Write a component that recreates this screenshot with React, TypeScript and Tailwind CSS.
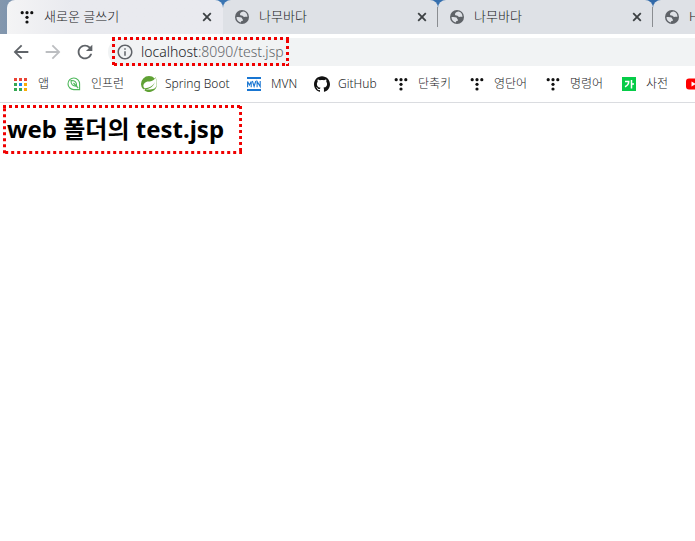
import React from 'react';
import { MdArrowBack, MdArrowForward, MdInfoOutline, MdRefresh } from 'react-icons/md';
import { SiGithub, SiSpring } from 'react-icons/si';

const TistoryIcon = () => (
  <svg viewBox="0 0 14 14" className="size-3.5 shrink-0" fill="#111">
    <circle cx="2.2" cy="2.7" r="1.6" />
    <circle cx="7" cy="2.7" r="1.6" />
    <circle cx="11.8" cy="2.7" r="1.6" />
    <circle cx="7" cy="7.3" r="1.6" />
    <circle cx="7" cy="12" r="1.6" />
  </svg>
);

const AppsIcon = () => (
  <svg viewBox="0 0 13 13" className="size-[13px] shrink-0" shapeRendering="crispEdges">
    <path fill="#ea4335" d="M0 0h3v3H0zM5 0h3v3H5zM10 0h3v3h-3z" />
    <path fill="#34a853" d="M0 5h3v3H0zM0 10h3v3H0zM5 10h3v3H5z" />
    <path fill="#1a82f7" d="M5 5h3v3H5z" />
    <path fill="#fbac05" d="M10 5h3v3h-3zM10 10h3v3h-3z" />
  </svg>
);

const InflearnIcon = () => (
  <svg viewBox="0 0 14 14" className="size-3.5 shrink-0" fill="none" stroke="#4fb85c" strokeWidth="1.1">
    <path d="M12.6 12.6H7A5.8 5.8 0 1 1 12.6 7z" />
    <path d="M4 3.500c3.500-.2 6 1.500 5.700 5.700C6 9.500 3.800 7.500 4 3.500zM6.500 6l4.700 5" />
  </svg>
);

const MavenIcon = () => (
  <svg viewBox="0 0 14 14" className="size-3.5 shrink-0">
    <path fill="#1976d2" d="M0 0h14v2H0zM0 12h14v2H0z" />
    <path
      fill="none"
      stroke="#1976d2"
      strokeWidth="1.1"
      d="M.6 10.200V4.500L2.400 8l1.800-3.500v5.700M5.400 4l1.700 5.500L8.800 4M10.100 10.200V4.500l3.100 5V4"
    />
  </svg>
);

const DictionaryIcon = () => (
  <svg viewBox="0 0 14 14" className="size-3.5 shrink-0">
    <path fill="#06cc48" d="M0 0h14v14H0z" />
    <path fill="none" stroke="#fff" strokeWidth="1.5" d="M3 4.500h3.700c0 2.500-1.300 4.200-3.700 5.200M9.500 3v8.500M9.500 7H12" />
  </svg>
);

const YoutubeIcon = () => (
  <svg viewBox="0 0 14 14" className="size-3.5 shrink-0">
    <rect y="1.500" width="14" height="11" rx="3" fill="#f00" />
    <path fill="#fff" d="M5.500 4.500v5L9.700 7z" />
  </svg>
);

const GlobeIcon = () => (
  <svg viewBox="0 0 14 14" className="size-3.5 shrink-0">
    <circle cx="7" cy="7" r="7" fill="#5f6368" />
    <path fill="#dee1e6" d="M8.800 1.600C6.800 1.800 5.300 2.700 5 4.100c-.2 1.200.8 1.500 1.900 1.500.9 0 1 .9 1.800 1.200 1 .4 2-.5 3.700.2A5.500 5.500 0 0 0 8.800 1.600z" />
    <path fill="#dee1e6" d="M1.500 7c1.800-.2 3.800-.2 4.900.6.9.6.6 1.600 1.300 2 .8.5.2 1.500-.8 1.500-.8 0-.8.7-1 1.300A5.500 5.500 0 0 1 1.500 7z" />
  </svg>
);

const CloseIcon = () => (
  <svg viewBox="0 0 14 14" className="size-3.5" fill="none" stroke="currentColor" strokeWidth="1.8">
    <path d="M3.200 3.200l7.600 7.600M10.800 3.200l-7.600 7.600" />
  </svg>
);

const tabs = [
  { title: '새로운 글쓰기', icon: <TistoryIcon />, active: true },
  { title: '나무바다', icon: <GlobeIcon />, active: false },
  { title: '나무바다', icon: <GlobeIcon />, active: false },
  { title: 'H', icon: <GlobeIcon />, active: false },
];

const bookmarks = [
  { label: '앱', icon: <AppsIcon />, width: 'w-[53px]' },
  { label: '인프런', icon: <InflearnIcon />, width: 'w-[74px]' },
  { label: 'Spring Boot', icon: <SiSpring className="size-4 shrink-0 text-[#5fa134]" />, width: 'w-[106px]' },
  { label: 'MVN', icon: <MavenIcon />, width: 'w-[67px]' },
  { label: 'GitHub', icon: <SiGithub className="size-4 shrink-0 text-[#111]" />, width: 'w-20' },
  { label: '단축키', icon: <TistoryIcon />, width: 'w-[76px]' },
  { label: '영단어', icon: <TistoryIcon />, width: 'w-[76px]' },
  { label: '명령어', icon: <TistoryIcon />, width: 'w-[76px]' },
  { label: '사전', icon: <DictionaryIcon />, width: 'w-16' },
  { label: '', icon: <YoutubeIcon />, width: 'w-6' },
];

// Red dotted frame drawn around whatever it is placed in
const Marker = ({ className }: { className: string }) => (
  <div className={`pointer-events-none absolute ${className}`}>
    <svg className="size-full overflow-hidden" fill="none" stroke="#f00000" strokeDasharray="3 3">
      <rect width="100%" height="100%" strokeWidth="6" />
    </svg>
  </div>
);

export default function App() {
  return (
    <div className="min-h-screen overflow-hidden bg-white font-['Noto_Sans','Noto_Sans_CJK_KR',sans-serif]">
      <header>
        <div className="flex h-[34px] overflow-hidden bg-linear-to-r from-[#8497ad] from-0% via-[#3c78b5] via-15% to-[#3068a8] pl-[7px]">
          {tabs.map((tab, i) => (
            <div
              key={i}
              className={`flex shrink-0 items-center rounded-t-lg ${
                tab.active
                  ? 'w-[216px] bg-linear-to-r from-[#f4f4f5] to-[#e9eaef] to-30% pl-[13px]'
                  : 'w-[215px] bg-[#dee1e6] pl-3'
              }`}
            >
              <button className="flex min-w-0 flex-1 items-center">
                <span className="flex w-6 items-center">{tab.icon}</span>
                <span className="text-[13px] font-light text-[#202124]">{tab.title}</span>
              </button>
              <button aria-label="Close tab" className="mr-2 text-[#3c4043]">
                <CloseIcon />
              </button>
              <span className={`h-5 w-px ${tab.active ? '' : 'bg-[#8a8d91]'}`} />
            </div>
          ))}
        </div>

        <div className="flex h-9 items-center pl-2.5">
          <button aria-label="Back" className="text-[#5f6368]">
            <MdArrowBack className="size-[22px]" />
          </button>
          <button aria-label="Forward" className="ml-2.5 text-[#bcbec1]">
            <MdArrowForward className="size-[22px]" />
          </button>
          <button aria-label="Reload" className="ml-2.5 text-[#5f6368]">
            <MdRefresh className="size-[22px]" />
          </button>
          <div className="relative ml-3 flex h-7 flex-1 items-center rounded-l-full bg-[#f1f3f4] pl-2">
            <MdInfoOutline className="size-[18px] text-[#5f6368]" />
            <span className="ml-[7px] text-sm font-light text-[#5f6368]">
              <span className="text-[#202124]">localhost</span>:8090/test.jsp
            </span>
            <Marker className="-top-px left-1 h-[29px] w-[177px]" />
          </div>
        </div>

        <nav className="flex h-[33px] overflow-hidden border-b border-[#dadce0] pb-1 pl-3.5">
          {bookmarks.map((item) => (
            <a
              key={item.label}
              href="#"
              aria-label={item.label || 'YouTube'}
              className={`flex shrink-0 items-center gap-2 text-xs whitespace-nowrap text-[#202124] ${item.width}`}
            >
              <span className="flex w-4 shrink-0">{item.icon}</span>
              <span className="font-light">{item.label}</span>
            </a>
          ))}
        </nav>
      </header>

      <main className="px-[7px] pt-2">
        <h2 className="relative w-fit text-2xl leading-9 font-bold text-black">
          web 폴더의 test.jsp
          <Marker className="-top-1.5 -right-[18px] -bottom-[7px] -left-1" />
        </h2>
      </main>
    </div>
  );
}
